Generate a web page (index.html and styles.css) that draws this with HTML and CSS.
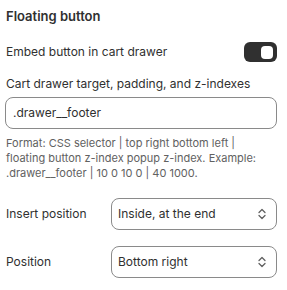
FILE: index.html
```html
<!DOCTYPE html>
<html lang="en">
  <head>
    <meta charset="UTF-8" />
    <title>Floating button</title>
    <link rel="stylesheet" href="styles.css">
  </head>
  <body>
    <div class="panel">
      <h2 class="heading">Floating button</h2>

      <div class="row toggle-row">
        <span class="label">Embed button in cart drawer</span>
        <span class="toggle"><span class="knob"></span></span>
      </div>

      <div class="field">
        <label class="label">Cart drawer target, padding, and z-indexes</label>
        <div class="input">.drawer__footer</div>
        <p class="help">
          Format: CSS selector | top right bottom left | floating button z-index popup z-index. Example: .drawer__footer | 10 0 10 0 | 40 1000.
        </p>
      </div>

      <div class="row select-row">
        <span class="label">Insert position</span>
        <div class="select">
          <span>Inside, at the end</span>
          <svg width="12" height="14" viewBox="0 0 12 14">
            <path d="M3 5.5 L6 2.5 L9 5.5 M3 8.5 L6 11.5 L9 8.5" fill="none" stroke="#616161" stroke-width="1.3" stroke-linecap="round" stroke-linejoin="round" />
          </svg>
        </div>
      </div>

      <div class="row select-row">
        <span class="label">Position</span>
        <div class="select">
          <span>Bottom right</span>
          <svg width="12" height="14" viewBox="0 0 12 14">
            <path d="M3 5.5 L6 2.5 L9 5.5 M3 8.5 L6 11.5 L9 8.5" fill="none" stroke="#616161" stroke-width="1.3" stroke-linecap="round" stroke-linejoin="round" />
          </svg>
        </div>
      </div>
    </div>
  </body>
</html>
```

FILE: styles.css
```css
* {
  margin: 0;
  padding: 0;
  box-sizing: border-box;
}

body {
  width: 287px;
  height: 290px;
  overflow: hidden;
  background: #ffffff;
  font-family: Inter, "Noto Sans", sans-serif;
  color: #303030;
  font-size: 12px;
  line-height: 20px;
}

.panel {
  padding: 6px 10px 0 5px;
}

.heading {
  font-size: 13px;
  font-weight: 600;
  line-height: 20px;
  padding-left: 1px;
  margin-bottom: 16px;
}

.label {
  padding-left: 1px;
}

.row {
  display: flex;
  align-items: center;
  justify-content: space-between;
}

.toggle-row {
  margin-bottom: 12px;
}

.toggle {
  width: 33px;
  height: 20px;
  background: #303030;
  border-radius: 6px;
  display: flex;
  align-items: center;
  justify-content: flex-end;
  padding-right: 4px;
}

.knob {
  width: 12px;
  height: 13px;
  background: #ffffff;
  border-radius: 4px;
}

.field .label {
  display: block;
  margin-bottom: 3px;
}

.input {
  height: 32px;
  border: 1px solid #8a8a8a;
  border-radius: 8px;
  padding: 5px 7px;
  line-height: 20px;
}

.help {
  margin-top: 7px;
  font-size: 11px;
  line-height: 15px;
  color: #616161;
  padding-left: 1px;
}

.select-row {
  margin-top: 17px;
}

.select-row + .select-row {
  margin-top: 16px;
}

.select {
  width: 166px;
  height: 32px;
  border: 1px solid #8a8a8a;
  border-radius: 8px;
  padding: 0 8px 0 6px;
  display: flex;
  align-items: center;
  justify-content: space-between;
}
```
